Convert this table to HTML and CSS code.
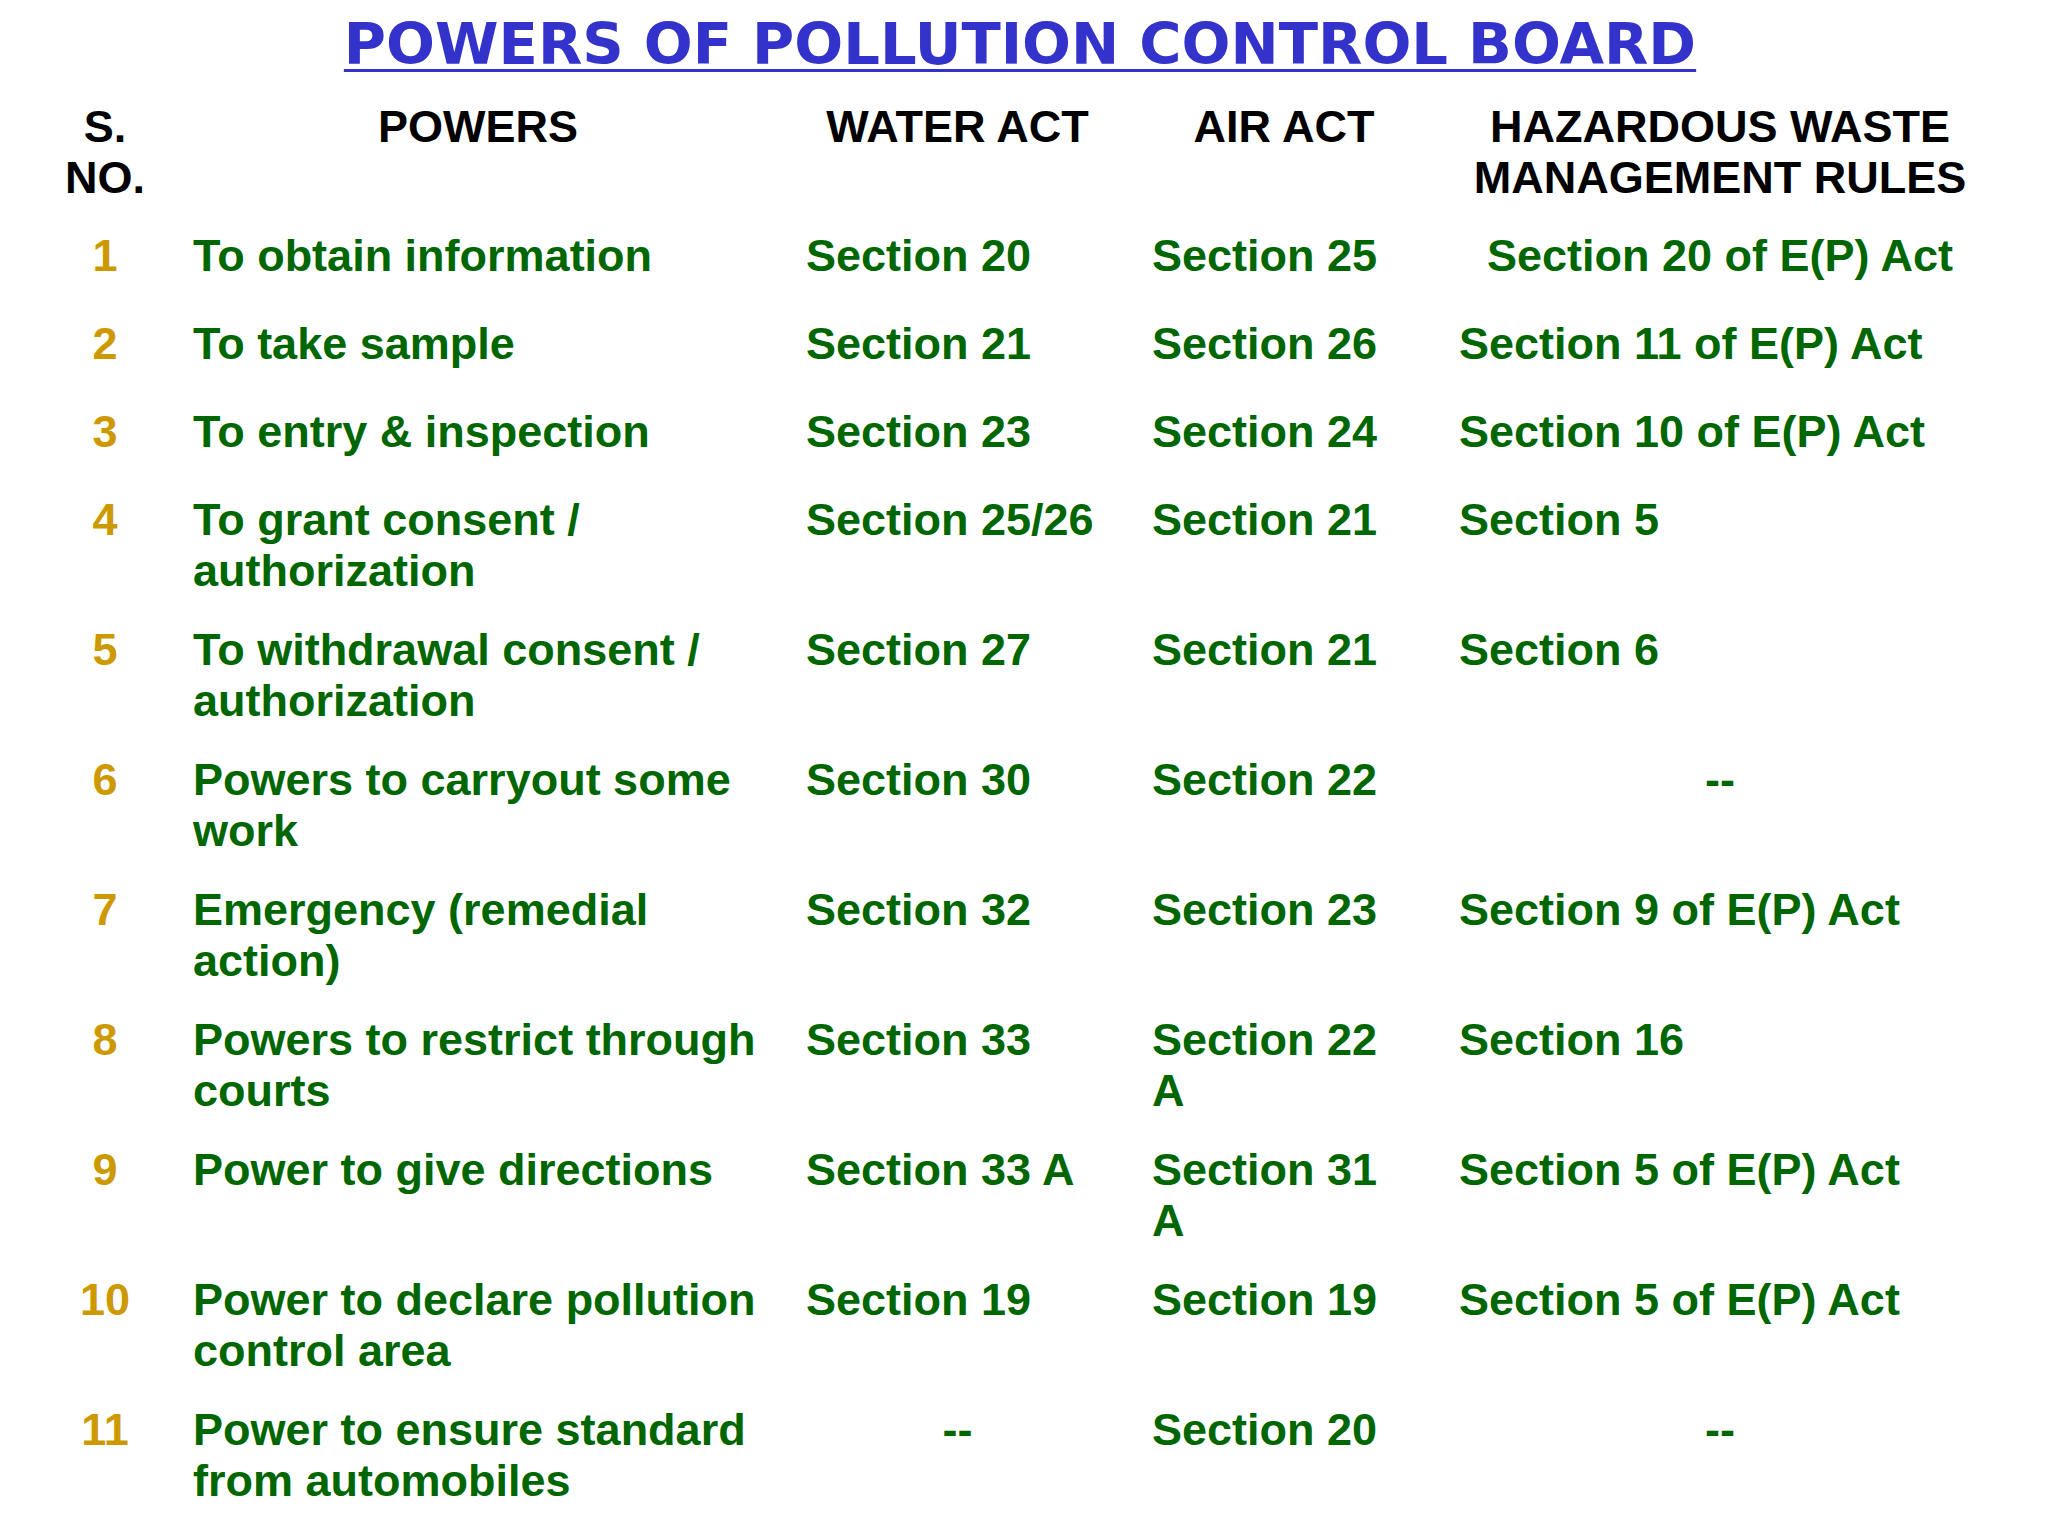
FILE: index.html
```html
<!DOCTYPE html>
<html lang="en">
<head>
<meta charset="utf-8">
<title>Powers of Pollution Control Board</title>
<link rel="stylesheet" href="styles.css">
</head>
<body>
<div class="slide">
  <h1 class="title">POWERS OF POLLUTION CONTROL BOARD</h1>
  <div class="grid">
    <div class="hd num">S.<br>NO.</div>
    <div class="hd c">POWERS</div>
    <div class="hd c">WATER ACT</div>
    <div class="hd c">AIR ACT</div>
    <div class="hd c">HAZARDOUS WASTE MANAGEMENT RULES</div>

    <div class="num">1</div>
    <div class="cell">To obtain information</div>
    <div class="cell">Section 20</div>
    <div class="cell">Section 25</div>
    <div class="cell c">Section 20 of E(P) Act</div>

    <div class="num">2</div>
    <div class="cell">To take sample</div>
    <div class="cell">Section 21</div>
    <div class="cell">Section 26</div>
    <div class="cell">Section 11 of E(P) Act</div>

    <div class="num">3</div>
    <div class="cell">To entry &amp; inspection</div>
    <div class="cell">Section 23</div>
    <div class="cell">Section 24</div>
    <div class="cell">Section 10 of E(P) Act</div>

    <div class="num">4</div>
    <div class="cell">To grant consent / authorization</div>
    <div class="cell">Section 25/26</div>
    <div class="cell">Section 21</div>
    <div class="cell">Section 5</div>

    <div class="num">5</div>
    <div class="cell">To withdrawal consent / authorization</div>
    <div class="cell">Section 27</div>
    <div class="cell">Section 21</div>
    <div class="cell">Section 6</div>

    <div class="num">6</div>
    <div class="cell">Powers to carryout some work</div>
    <div class="cell">Section 30</div>
    <div class="cell">Section 22</div>
    <div class="cell c">--</div>

    <div class="num">7</div>
    <div class="cell">Emergency (remedial action)</div>
    <div class="cell">Section 32</div>
    <div class="cell">Section 23</div>
    <div class="cell">Section 9 of E(P) Act</div>

    <div class="num">8</div>
    <div class="cell">Powers to restrict through courts</div>
    <div class="cell">Section 33</div>
    <div class="cell">Section 22 A</div>
    <div class="cell">Section 16</div>

    <div class="num">9</div>
    <div class="cell">Power to give directions</div>
    <div class="cell">Section 33 A</div>
    <div class="cell">Section 31 A</div>
    <div class="cell">Section 5 of E(P) Act</div>

    <div class="num">10</div>
    <div class="cell">Power to declare pollution control area</div>
    <div class="cell">Section 19</div>
    <div class="cell">Section 19</div>
    <div class="cell">Section 5 of E(P) Act</div>

    <div class="num">11</div>
    <div class="cell">Power to ensure standard from automobiles</div>
    <div class="cell c">--</div>
    <div class="cell">Section 20</div>
    <div class="cell c">--</div>
  </div>
</div>
</body>
</html>
```
FILE: styles.css
```css
html, body {
  margin: 0;
  padding: 0;
  background: #ffffff;
}

.slide {
  width: 2048px;
  padding-top: 13px;
  font-family: "Liberation Sans", Arial, sans-serif;
  font-weight: bold;
}

.title {
  margin: 0;
  padding-right: 8px;
  text-align: center;
  font-family: "DejaVu Sans", Verdana, sans-serif;
  font-weight: bold;
  font-size: 57.6px;
  line-height: 64px;
  color: #3333cc;
  text-decoration: underline;
  text-decoration-thickness: 3px;
  text-underline-offset: 5px;
}

.grid {
  margin-top: 24px;
  margin-left: 60px;
  display: grid;
  grid-template-columns: 90px 570px 303px 264px 522px;
  column-gap: 43px;
  grid-auto-rows: minmax(88px, auto);
  font-size: 45px;
  line-height: 51px;
}

.grid > div {
  padding-bottom: 28px;
}

.grid > .hd {
  color: #000000;
  padding-bottom: 27px;
}

.num {
  text-align: center;
  color: #cc9900;
}

.hd.num {
  color: #000000;
}

.cell {
  color: #006600;
}

.c {
  text-align: center;
}
```
